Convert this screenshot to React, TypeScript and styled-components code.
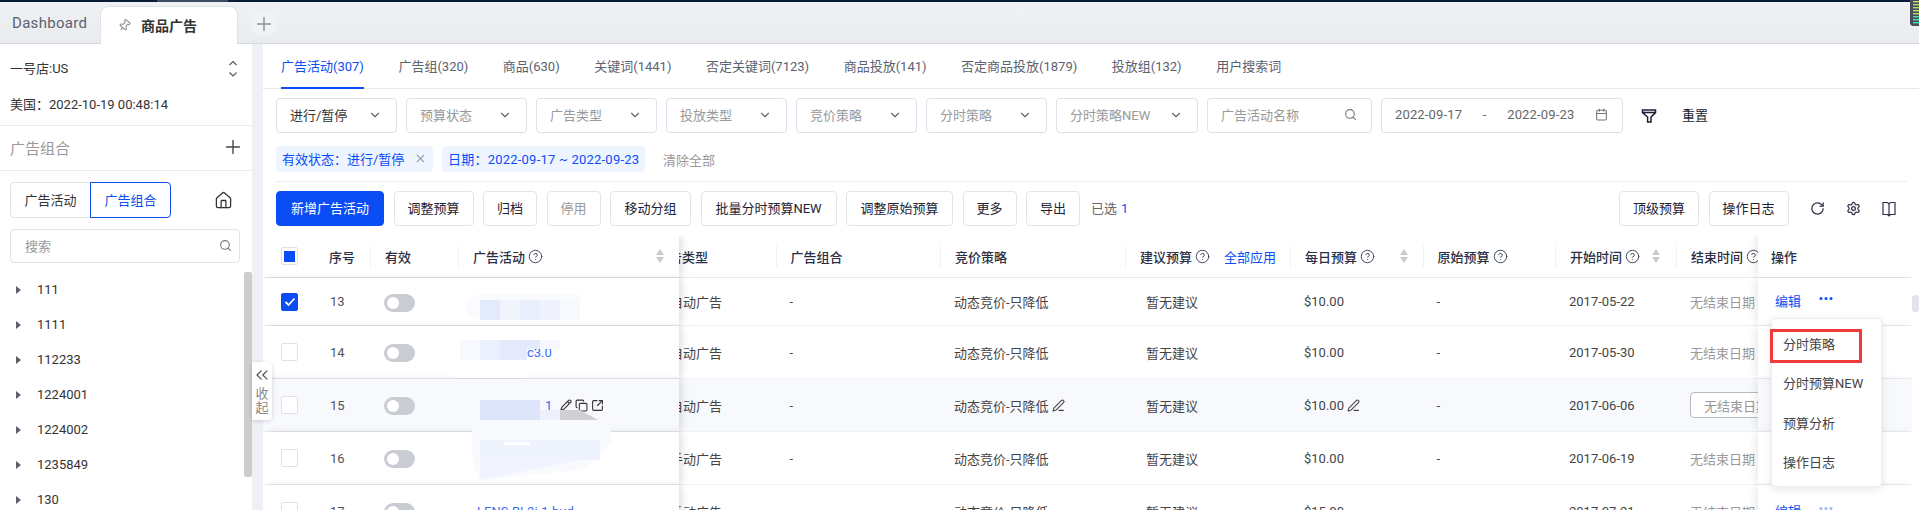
import React from "react";
import styled, { createGlobalStyle } from "styled-components";
import {
  Calendar, ChevronDown, ChevronsLeft, CircleHelp, Copy, House, Pencil, PenLine, Pin, Plus,
  RotateCw, Search, Settings, SquareArrowOutUpRight, X,
} from "lucide-react";

const BLUE = "#0b4df5";
const FONT = `Roboto, "Noto Sans CJK SC", sans-serif`;

const Global = createGlobalStyle`
  html, body { margin: 0; padding: 0; background: #fff; overflow: hidden; }
  body { font-family: ${FONT}; font-size: 13px; color: #333; }
  * { box-sizing: border-box; }
`;

const Root = styled.div`
  position: relative; width: 1919px; height: 510px; overflow: hidden;
  display: flex; flex-direction: column;
`;
const TopStrip = styled.div`
  height: 2px; flex: none; background: linear-gradient(90deg, #0b1b3a 157px, #3d4b60 157px, #3d4b60 228px, #0b1b3a 228px);
`;
const TabBar = styled.div`
  height: 42px; flex: none; display: flex; align-items: flex-end;
  background: linear-gradient(180deg, #eff1f4, #e9ecef);
  border-bottom: 1px solid #d6d7dc;
`;
const DashTab = styled.div`
  width: 100px; height: 41px; padding: 1px 0 0 12px; display: flex; align-items: center;
  font-size: 15px; color: #5a6270; letter-spacing: .3px;
`;
const ActiveTab = styled.div`
  width: 138px; height: 38px; margin-bottom: -1px; padding: 0 0 1px 17px; display: flex; align-items: center; gap: 10px;
  background: #fff; border: 1px solid #dfe2e8; border-bottom: 0; border-radius: 8px 8px 0 0;
  font-size: 14px; font-weight: 700; color: #333;
`;
const AddTab = styled.div`
  width: 26px; height: 26px; margin: 0 0 6px 13px; border-radius: 50%; background: #f0f2f5;
  display: flex; align-items: center; justify-content: center; color: #8b8f97;
`;
const PinIcon = styled(Pin)` transform: rotate(40deg); color: #8a8f98; `;
const Meter = styled.svg` position: absolute; right: 0; top: 0; `;

const Body = styled.div` flex: 1; display: flex; min-height: 0; `;
const Sidebar = styled.aside`
  width: 252px; flex: none; display: flex; flex-direction: column; background: #fff;
`;
const Gutter = styled.div` width: 11px; flex: none; background: #eef0f5; `;
const ShopBlock = styled.div`
  height: 82px; flex: none; border-bottom: 1px solid #e9ebef; padding: 16px 14px 0 10px;
  display: flex; flex-direction: column; gap: 18px; line-height: 18px;
`;
const ShopRow = styled.div` display: flex; align-items: center; justify-content: space-between; font-size: 13px; color: #333; `;
const GroupHead = styled.div`
  height: 45px; flex: none; border-bottom: 1px solid #e9ebef; padding: 0 8px 2px 10px;
  display: flex; align-items: center; justify-content: space-between;
  font-size: 15px; color: #999;
`;
const SideSection = styled.div` padding: 11px 12px 0 10px; flex: none; `;
const SegRow = styled.div` display: flex; align-items: center; justify-content: space-between; padding-right: 7px; `;
const Seg = styled.div` display: flex; height: 36px; `;
const SegItem = styled.div<{ $on?: boolean }>`
  width: 81px; display: flex; align-items: center; justify-content: center; font-size: 13px; padding-bottom: 2px;
  color: ${p => (p.$on ? BLUE : "#333")};
  border: 1px solid ${p => (p.$on ? BLUE : "#e0e2e8")};
  border-radius: ${p => (p.$on ? "0 4px 4px 0" : "4px 0 0 4px")};
  ${p => (p.$on ? "margin-left: -1px;" : "")}
`;
const SearchBox = styled.div`
  height: 34px; margin-top: 11px; border: 1px solid #e0e2e8; border-radius: 4px;
  display: flex; align-items: center; justify-content: space-between; padding: 0 7px 2px 14px;
  color: #999; font-size: 13px;
`;
const Tree = styled.div` position: relative; flex: 1; margin-top: 9px; min-height: 0; `;
const TreeRow = styled.div`
  height: 35px; display: flex; align-items: center; padding-left: 16px; gap: 11px; color: #333; font-size: 13px;
`;
const Caret = styled.span`
  width: 0; height: 0; border-left: 5px solid #5a606c; border-top: 4.5px solid transparent; border-bottom: 4.5px solid transparent; margin-right: 5px;
`;
const TreeThumb = styled.div` position: absolute; right: 0; top: 0; width: 8px; height: 205px; background: #cdcdcd; border-radius: 2px; `;
const Collapse = styled.div`
  position: absolute; left: 252px; top: 362px; width: 20px; height: 58px; z-index: 8;
  background: #fff; border-radius: 0 4px 4px 0; box-shadow: 0 1px 4px rgba(0,0,0,.16);
  display: flex; flex-direction: column; align-items: center; color: #888; font-size: 13px; line-height: 14px; padding-top: 3px;
`;
const CollapseIcon = styled(ChevronsLeft)` color: #555; margin-bottom: 2px; flex: none; `;

const Main = styled.main` flex: 1; min-width: 0; display: flex; flex-direction: column; background: #fff; `;
const NavTabs = styled.nav`
  height: 45px; flex: none; display: flex; gap: 34.5px; padding-left: 18px; border-bottom: 1px solid #e6e8ec;
`;
const NavTab = styled.div<{ $on?: boolean }>`
  display: flex; align-items: center; padding-bottom: 1px; font-size: 13px; white-space: nowrap;
  color: ${p => (p.$on ? BLUE : "#5c6270")};
  border-bottom: 2px solid ${p => (p.$on ? BLUE : "transparent")};
  margin-bottom: -1px;
`;
const Filters = styled.div` display: flex; align-items: center; gap: 9px; padding: 9px 0 0 13px; flex: none; `;
const Select = styled.div<{ $w: number; $filled?: boolean }>`
  width: ${p => p.$w}px; height: 35px; flex: none; border: 1px solid #dfe1e8; border-radius: 4px;
  display: flex; align-items: center; justify-content: space-between; padding: 0 14px 2px 13px;
  font-size: 13px; color: ${p => (p.$filled ? "#333" : "#999")}; white-space: nowrap;
`;
const DateText = styled.span` color: #666; letter-spacing: .15px; `;
const FunnelIcon = styled.svg` margin-left: 9px; flex: none; `;
const ResetLink = styled.span` margin-left: 16px; padding-bottom: 2px; color: #1a1f36; font-size: 13px; `;

const TagRow = styled.div` display: flex; align-items: center; gap: 9px; margin: 13px 12px 0 13px; padding-bottom: 9px; border-bottom: 1px solid #eceef1; height: 36px; flex: none; `;
const Tag = styled.div<{ $w: number }>`
  width: ${p => p.$w}px; height: 26px; border-radius: 4px; background: #eff5ff; color: ${BLUE};
  display: flex; align-items: center; justify-content: space-between; padding: 0 6px 1px; font-size: 13px; white-space: nowrap;
`;
const TagDates = styled.span` letter-spacing: .22px; `;
const TagClose = styled(X)` color: #9a9da5; `;
const Clear = styled.span` margin-left: 9px; color: #999; `;

const ActionRow = styled.div` display: flex; align-items: center; gap: 9.5px; margin-top: 9px; padding: 0 12px 0 13px; flex: none; `;
const Btn = styled.div<{ $w: number; $primary?: boolean; $dim?: boolean }>`
  width: ${p => p.$w}px; height: 35px; padding-bottom: 2px; display: flex; align-items: center; justify-content: center;
  border-radius: 4px; white-space: nowrap; flex: none; font-size: 13px;
  border: 1px solid ${p => (p.$primary ? BLUE : "#e2e4ea")};
  background: ${p => (p.$primary ? BLUE : "#fff")};
  color: ${p => (p.$primary ? "#fff" : p.$dim ? "#999" : "#1f2233")};
`;
const Selected = styled.span` margin-left: 1.5px; padding-bottom: 2px; color: #666; `;
const SelectedNum = styled.span` color: ${BLUE}; margin-left: 4px; `;
const ActionRight = styled.div` margin-left: auto; display: flex; align-items: center; gap: 9.5px; `;
const ToolIcons = styled.div` display: flex; align-items: center; gap: 21px; margin-left: 12px; margin-right: 11px; color: #2d3348; `;

const Table = styled.section` position: relative; margin-top: 9px; flex: 1; min-height: 0; overflow: hidden; padding-right: 7px; `;
const Row = styled.div<{ $h: number; $hover?: boolean; $head?: boolean }>`
  display: flex; height: ${p => p.$h}px; width: 1649px;
  background: ${p => (p.$hover ? "#f8f9fd" : "#fff")};
  border-bottom: 1px solid ${p => (p.$head ? "#e8eaee" : "#f0f1f4")};
  ${p => (p.$head ? "font-weight: 500; color: #2a2f45;" : "color: #444;")}
`;
const LeftPane = styled.div`
  width: 416px; flex: none; display: grid; grid-template-columns: 56px 51px 88px 221px; align-items: center;
  background: inherit; position: relative; z-index: 2; box-shadow: 4px 0 7px -1px rgba(0,0,0,.13);
`;
const MidPane = styled.div`
  flex: 1; min-width: 0; overflow: hidden; display: grid; align-items: center;
  grid-template-columns: 96.5px 164.5px 185px 165px 132.5px 132.5px 121px 81.5px;
`;
const RightPane = styled.div`
  width: 154.5px; flex: none; display: flex; align-items: center; gap: 18px; padding: 0 0 2px 17.5px;
  background: inherit; position: relative; z-index: 2; box-shadow: -4px 0 7px -1px rgba(0,0,0,.08);
`;
const HeadOp = styled.span` margin: 2px 0 0 -4px; `;
const HeadCell = styled.div<{ $line?: boolean; $pad?: number }>`
  height: 21px; display: flex; align-items: center; gap: 3px; white-space: nowrap; overflow: hidden;
  padding-left: ${p => p.$pad ?? 14}px;
  ${p => (p.$line ? "border-left: 1px solid #eef0f2;" : "")}
`;
const HeadClip = styled.span` margin-left: -37px; `;
const BlueLink = styled.span` color: ${BLUE}; font-weight: 400; margin-left: 11px; `;
const Help = styled(CircleHelp)` flex: none; color: #3a3f50; `;
const Sort = styled.span<{ $r: number }>`
  margin-left: auto; margin-right: ${p => p.$r}px; width: 8px; flex: none; display: flex; flex-direction: column; gap: 2px;
`;
const SortUp = styled.i` width: 0; height: 0; border: 4px solid transparent; border-top: 0; border-bottom: 6px solid #c9ccd2; `;
const SortDown = styled.i` width: 0; height: 0; border: 4px solid transparent; border-bottom: 0; border-top: 6px solid #c9ccd2; `;
const CheckCell = styled.div` padding-left: 18px; `;
const Check = styled.span<{ $state?: "on" | "mixed" }>`
  width: 17px; height: 18px; display: flex; align-items: center; justify-content: center; border-radius: 2px;
  border: 1px solid ${p => (p.$state === "on" ? BLUE : "#dfe1e6")};
  background: ${p => (p.$state === "on" ? BLUE : "#fff")};
  color: #fff;
`;
const CheckDot = styled.i` width: 11px; height: 11px; background: ${BLUE}; `;
const Seq = styled.div` padding-left: 11px; color: #555; `;
const Toggle = styled.div` margin: 2px 0 0 14px; width: 31px; height: 18px; border-radius: 9px; background: #c9ccd3; padding: 3px 0 0 3px; `;
const Knob = styled.div` width: 12px; height: 12px; border-radius: 50%; background: #fff; `;
const NameCell = styled.div<{ $indent: number }>`
  padding-left: ${p => p.$indent}px; display: flex; align-items: center; color: #3b6cf0; white-space: nowrap; overflow: hidden;
`;
const NameIcons = styled.span` display: inline-flex; align-items: center; gap: 3px; margin-left: 8px; color: #333; `;
const DataCell = styled.div<{ $pad?: number; $muted?: boolean }>`
  padding-left: ${p => p.$pad ?? 14}px; display: flex; align-items: center; gap: 3px; white-space: nowrap; overflow: hidden;
  ${p => (p.$muted ? "color: #999;" : "")}
`;
const ClipText = styled.span` margin-left: -23px; `;
const EndInput = styled.div`
  margin-left: 14px; width: 90px; height: 26px; flex: none; border: 1px solid #b7bac2; border-radius: 4px;
  display: flex; align-items: center; padding-left: 13px; color: #999; background: #fff;
`;
const Edit = styled.span` color: ${BLUE}; `;
const Dots = styled.svg` flex: none; margin-bottom: 4px; `;
const ScrollThumb = styled.div` position: absolute; right: 0; top: 60px; width: 7px; height: 17px; background: #e3e4ea; border-radius: 3px; z-index: 3; `;
const BlurLayer = styled.svg` position: absolute; left: 175px; top: 43px; z-index: 4; pointer-events: none; `;
const Menu = styled.div`
  position: absolute; left: 1508px; top: 83px; width: 111px; height: 169px; z-index: 6; padding-top: 5px;
  background: #fff; border-radius: 4px; border: 1px solid #eceef2; box-shadow: 0 2px 10px rgba(0,0,0,.1);
`;
const MenuItem = styled.div` height: 39.3px; display: flex; align-items: center; padding-left: 11px; color: #444; white-space: nowrap; `;
const Callout = styled.div` position: absolute; left: -2px; top: 10px; width: 92px; height: 34px; border: 3px solid #f23a3a; `;

const Updown = () => (
  <svg width="10" height="18" viewBox="0 0 10 18" fill="none" stroke="#555" strokeWidth="1.1">
    <path d="M1.5 5 5 1.5 8.5 5M1.5 12.5 5 16 8.5 12.5" />
  </svg>
);
const Funnel = () => (
  <FunnelIcon width="16" height="16" viewBox="0 0 16 16" fill="none" stroke="#1a1f36" strokeWidth="1.5">
    <path d="M1.5 2h13v2.6L10 9v5H6.6V9L1.5 4.6z M1.5 4.6h13" />
  </FunnelIcon>
);
const Book = () => (
  <svg width="14" height="16" viewBox="0 0 14 16" fill="none" stroke="#2d3348" strokeWidth="1.2">
    <path d="M1 1.5h4.5L7 3l1.5-1.5H13v12H8.5L7 15l-1.5-1.5H1zM7 3v12" />
  </svg>
);
const Ellipsis = ({ dim }: { dim?: boolean }) => (
  <Dots width="14" height="5" viewBox="0 0 14 5" fill={dim ? "#9db6f5" : BLUE}>
    <circle cx="2" cy="2.5" r="1.5" /><circle cx="7" cy="2.5" r="1.5" /><circle cx="12" cy="2.5" r="1.5" />
  </Dots>
);
const SortPair = ({ r }: { r: number }) => (
  <Sort $r={r}><SortUp /><SortDown /></Sort>
);

const navTabs = ["广告活动(307)", "广告组(320)", "商品(630)", "关键词(1441)", "否定关键词(7123)", "商品投放(141)", "否定商品投放(1879)", "投放组(132)", "用户搜索词"];
const selects: [string, number, boolean?][] = [["进行/暂停", 121, true], ["预算状态", 121], ["广告类型", 121], ["投放类型", 121], ["竞价策略", 121], ["分时策略", 121], ["分时策略NEW", 142]];
const tree = ["111", "1111", "112233", "1224001", "1224002", "1235849", "130"];
const actions: [string, number][] = [["调整预算", 80], ["归档", 54], ["停用", 54], ["移动分组", 81], ["批量分时预算NEW", 136], ["调整原始预算", 107], ["更多", 54], ["导出", 54]];

type RowData = { h: number; seq: number; type: string; budget: string; start: string; name?: string; indent: number; hover?: boolean; on?: boolean };
const rows: RowData[] = [
  { h: 48, seq: 13, type: "自动广告", budget: "$10.00", start: "2017-05-22", indent: 14, on: true },
  { h: 53, seq: 14, type: "自动广告", budget: "$10.00", start: "2017-05-30", indent: 69, name: "c3.0" },
  { h: 53, seq: 15, type: "自动广告", budget: "$10.00", start: "2017-06-06", indent: 87, name: "1", hover: true },
  { h: 53, seq: 16, type: "手动广告", budget: "$10.00", start: "2017-06-19", indent: 14 },
  { h: 53, seq: 17, type: "手动广告", budget: "$15.00", start: "2017-07-21", indent: 19, name: "LENS-BL2i-1-bud" },
];

export default function App() {
  return (
    <Root>
      <Global />
      <TopStrip />
      <TabBar>
        <DashTab>Dashboard</DashTab>
        <ActiveTab><PinIcon size={13} />商品广告</ActiveTab>
        <AddTab><Plus size={22} strokeWidth={1.6} /></AddTab>
      </TabBar>
      <Meter width="10" height="26" viewBox="0 0 10 26">
        <path d="M1 0h9v26H3l-2-2z" fill="#4a4e5c" />
        {[1, 4, 7, 10, 13].map(y => <rect key={y} x="4" y={y} width="6" height="1.4" fill="#b5e35a" />)}
        {[16, 19, 22].map(y => <rect key={y} x="4" y={y} width="6" height="1.4" fill="#45e6a8" />)}
      </Meter>
      <Body>
        <Sidebar>
          <ShopBlock>
            <ShopRow>一号店:US<Updown /></ShopRow>
            <ShopRow>美国：2022-10-19 00:48:14<span /></ShopRow>
          </ShopBlock>
          <GroupHead>广告组合<Plus size={22} strokeWidth={1.5} color="#444" /></GroupHead>
          <SideSection>
            <SegRow>
              <Seg><SegItem>广告活动</SegItem><SegItem $on>广告组合</SegItem></Seg>
              <House size={19} strokeWidth={1.6} color="#333" />
            </SegRow>
            <SearchBox>搜索<Search size={13} color="#777" /></SearchBox>
          </SideSection>
          <Tree>
            <TreeThumb />
            {tree.map(t => <TreeRow key={t}><Caret />{t}</TreeRow>)}
          </Tree>
        </Sidebar>
        <Gutter />
        <Main>
          <NavTabs>
            {navTabs.map((t, i) => <NavTab key={t} $on={i === 0}>{t}</NavTab>)}
          </NavTabs>
          <Filters>
            {selects.map(([t, w, f]) => (
              <Select key={t} $w={w} $filled={f}>{t}<ChevronDown size={14} color="#666" /></Select>
            ))}
            <Select $w={165}>广告活动名称<Search size={13} color="#777" /></Select>
            <Select $w={242}>
              <DateText>2022-09-17</DateText><DateText>-</DateText><DateText>2022-09-23</DateText>
              <Calendar size={13} color="#777" />
            </Select>
            <Funnel />
            <ResetLink>重置</ResetLink>
          </Filters>
          <TagRow>
            <Tag $w={157}>有效状态：进行/暂停<TagClose size={13} /></Tag>
            <Tag $w={203}><TagDates>日期：2022-09-17 ~ 2022-09-23</TagDates></Tag>
            <Clear>清除全部</Clear>
          </TagRow>
          <ActionRow>
            <Btn $primary $w={108}>新增广告活动</Btn>
            {actions.map(([a, w]) => <Btn key={a} $w={w} $dim={a === "停用"}>{a}</Btn>)}
            <Selected>已选<SelectedNum>1</SelectedNum></Selected>
            <ActionRight>
              <Btn $w={80}>顶级预算</Btn>
              <Btn $w={80}>操作日志</Btn>
              <ToolIcons>
                <RotateCw size={15} />
                <Settings size={15} />
                <Book />
              </ToolIcons>
            </ActionRight>
          </ActionRow>
          <Table>
            <Row $h={43} $head>
              <LeftPane>
                <CheckCell><Check><CheckDot /></Check></CheckCell>
                <HeadCell $pad={10}>序号</HeadCell>
                <HeadCell $line>有效</HeadCell>
                <HeadCell $line>广告活动<Help size={15} strokeWidth={1.5} /><SortPair r={15} /></HeadCell>
              </LeftPane>
              <MidPane>
                <HeadCell><HeadClip>广告类型</HeadClip></HeadCell>
                <HeadCell $line>广告组合</HeadCell>
                <HeadCell $line>竞价策略</HeadCell>
                <HeadCell $line>建议预算<Help size={15} strokeWidth={1.5} /><BlueLink>全部应用</BlueLink></HeadCell>
                <HeadCell $line>每日预算<Help size={15} strokeWidth={1.5} /><SortPair r={15} /></HeadCell>
                <HeadCell $line>原始预算<Help size={15} strokeWidth={1.5} /></HeadCell>
                <HeadCell $line>开始时间<Help size={15} strokeWidth={1.5} /><SortPair r={16} /></HeadCell>
                <HeadCell $line>结束时间<Help size={15} strokeWidth={1.5} /></HeadCell>
              </MidPane>
              <RightPane><HeadOp>操作</HeadOp></RightPane>
            </Row>
            {rows.map(r => (
              <Row key={r.seq} $h={r.h} $hover={r.hover}>
                <LeftPane>
                  <CheckCell>
                    <Check $state={r.on ? "on" : undefined}>
                      {r.on && <svg width="12" height="10" viewBox="0 0 12 10" fill="none" stroke="#fff" strokeWidth="1.8"><path d="M1.5 5 4.5 8 10.5 1.5" /></svg>}
                    </Check>
                  </CheckCell>
                  <Seq>{r.seq}</Seq>
                  <Toggle><Knob /></Toggle>
                  <NameCell $indent={r.indent}>
                    {r.name}
                    {r.hover && (
                      <NameIcons>
                        <Pencil size={12} strokeWidth={2.2} />
                        <Copy size={13} strokeWidth={2} />
                        <SquareArrowOutUpRight size={13} strokeWidth={2} />
                      </NameIcons>
                    )}
                  </NameCell>
                </LeftPane>
                <MidPane>
                  <DataCell><ClipText>{r.type}</ClipText></DataCell>
                  <DataCell>-</DataCell>
                  <DataCell>动态竞价-只降低{r.hover && <PenLine size={13} strokeWidth={2} />}</DataCell>
                  <DataCell $pad={21}>暂无建议</DataCell>
                  <DataCell>{r.budget}{r.hover && <PenLine size={13} strokeWidth={2} />}</DataCell>
                  <DataCell>-</DataCell>
                  <DataCell>{r.start}</DataCell>
                  {r.hover ? <EndInput>无结束日期</EndInput> : <DataCell $muted>无结束日期</DataCell>}
                </MidPane>
                <RightPane>
                  <Edit>编辑</Edit>
                  <Ellipsis dim={r.seq === 17} />
                </RightPane>
              </Row>
            ))}
            <BlurLayer width="180" height="232" viewBox="438 278 180 232">
              <path d="M478 294H580V320H478Q462 312 465 302Z" fill="#fafbfe" />
              <rect x="480" y="300" width="20" height="20" fill="#e3eafc" />
              <rect x="500" y="300" width="20" height="20" fill="#f1f4fd" />
              <rect x="520" y="300" width="20" height="20" fill="#e8eefc" />
              <rect x="540" y="300" width="20" height="20" fill="#f0f3fd" />
              <rect x="560" y="300" width="20" height="20" fill="#f8f9fe" />
              <path d="M515 327H590V335L560 345H527V378H455L438 360V345Z" fill="#fff" />
              <rect x="460" y="340" width="20" height="20" fill="#f8f9fe" />
              <rect x="480" y="340" width="20" height="20" fill="#eaf0fc" />
              <rect x="500" y="340" width="20" height="20" fill="#e5ebfc" />
              <path d="M520 340H540V349H527V360H520Z" fill="#e3eafc" />
              <rect x="540" y="340" width="20" height="9" fill="#f7f8fe" />
              <path d="M472 420H608L612 440L598 458L580 470L480 480Q472 470 472 450Z" fill="#f9fafe" />
              <rect x="480" y="400" width="60" height="20" fill="#dde5fb" />
              <rect x="540" y="410" width="20" height="10" fill="#eef1fb" />
              <path d="M560 410H580L598 420H560Z" fill="#d0d0d4" />
              <rect x="480" y="440" width="120" height="20" fill="#eff3fd" />
              <path d="M480 460H580L480 480Z" fill="#f1f4fe" />
              <rect x="504" y="442" width="26" height="3" fill="#fff" />
            </BlurLayer>
            <ScrollThumb />
            <Menu>
              <MenuItem>分时策略</MenuItem>
              <MenuItem>分时预算NEW</MenuItem>
              <MenuItem>预算分析</MenuItem>
              <MenuItem>操作日志</MenuItem>
              <Callout />
            </Menu>
          </Table>
        </Main>
      </Body>
      <Collapse>
        <CollapseIcon size={20} strokeWidth={1.5} />
        <span>收</span>
        <span>起</span>
      </Collapse>
    </Root>
  );
}
